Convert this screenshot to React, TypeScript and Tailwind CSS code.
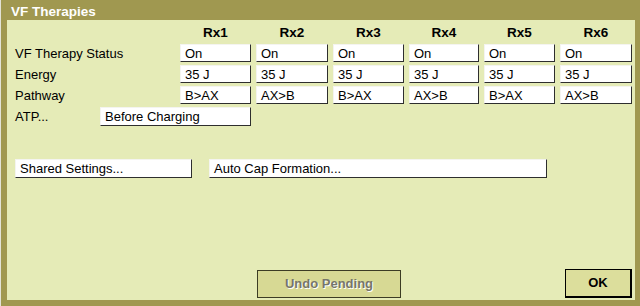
const font = { fontFamily: '"Liberation Sans", Arial, sans-serif' };

const status = ["On", "On", "On", "On", "On", "On"];
const energy = ["35 J", "35 J", "35 J", "35 J", "35 J", "35 J"];
const pathway = ["B>AX", "AX>B", "B>AX", "AX>B", "B>AX", "AX>B"];

function Cell({ children, className = "" }: { children: React.ReactNode; className?: string }) {
  return (
    <div
      className={`h-[18px] bg-white border-r border-b border-[#2e2e2e] border-t border-l border-t-[#f4f4f0] border-l-[#f4f4f0] pl-[4px] flex items-center text-[13px] text-black leading-none ${className}`}
    >
      {children}
    </div>
  );
}

function Row({ label, values }: { label: string; values: string[] }) {
  return (
    <>
      <div className="h-[18px] flex items-center text-[13px] leading-none text-black">{label}</div>
      {values.map((v, i) => (
        <Cell key={i}>{v}</Cell>
      ))}
    </>
  );
}

export default function App() {
  return (
    <div className="w-[640px] h-[306px] flex bg-[#a09850] overflow-hidden" style={font}>
      <div className="w-[2px] h-full bg-[#e2e2d6]" />
      <div className="flex-1 flex flex-col">
        {/* title bar */}
        <div className="h-[20px] flex items-center pl-[10px] pt-[3px] text-white font-bold text-[13.5px] leading-none">
          VF Therapies
        </div>
        <div className="flex-1 flex pl-[6px] pr-[5px] pb-[6px]">
          <div className="flex-1 bg-[#e5ebb7] flex flex-col pl-[8px] pr-[3px]">
            <div className="grid grid-cols-[160px_71px_72px_71px_70px_71px_72px] gap-x-[5px] gap-y-[3px] mt-[5px]">
              <div />
              {["Rx1", "Rx2", "Rx3", "Rx4", "Rx5", "Rx6"].map((r) => (
                <div key={r} className="h-[16px] flex items-center justify-center font-bold text-[13.5px] leading-none text-black">
                  {r}
                </div>
              ))}
              <Row label="VF Therapy Status" values={status} />
              <Row label="Energy" values={energy} />
              <Row label="Pathway" values={pathway} />
            </div>
            <div className="flex mt-[3px] h-[19px]">
              <div className="w-[85px] flex items-center text-[13px] leading-none text-black">ATP...</div>
              <Cell className="w-[151px] h-[19px]">Before Charging</Cell>
            </div>
            <div className="flex mt-[33px] gap-[17px]">
              <Cell className="w-[177px] h-[19px]">Shared Settings...</Cell>
              <Cell className="w-[338px] h-[19px]">Auto Cap Formation...</Cell>
            </div>
            <div className="flex-1" />
            <div className="flex items-end pb-[2px]">
              <div className="w-[242px]" />
              <div className="w-[144px] h-[28px] bg-[#d7d994] border border-[#3c3c24] flex items-center justify-center font-bold text-[13px] text-[#76766a] [text-shadow:1px_1px_0_#ffffff]">
                Undo Pending
              </div>
              <div className="flex-1" />
              <div className="w-[67px] h-[29px] bg-[#dcde9c] border border-black border-r-2 border-b-2 flex items-center justify-center font-bold text-[13px] text-black">
                OK
              </div>
            </div>
          </div>
        </div>
      </div>
    </div>
  );
}
